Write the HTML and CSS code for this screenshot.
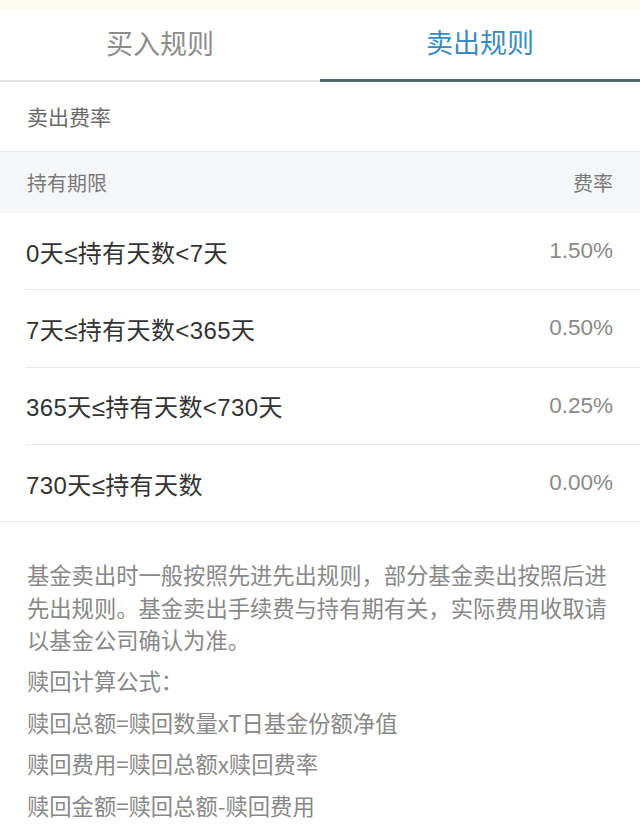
FILE: index.html
```html
<!DOCTYPE html>
<html lang="zh-CN">
<head>
<meta charset="utf-8">
<link rel="stylesheet" href="styles.css">
</head>
<body>
<div class="topbar"></div>
<div class="tabs">
  <div class="tab">买入规则</div>
  <div class="tab active">卖出规则</div>
</div>
<div class="section-title">卖出费率</div>
<div class="thead">
  <span>持有期限</span>
  <span>费率</span>
</div>
<div class="rows">
  <div class="row"><span class="term">0天≤持有天数&lt;7天</span><span class="rate">1.50%</span></div>
  <div class="row"><span class="term">7天≤持有天数&lt;365天</span><span class="rate">0.50%</span></div>
  <div class="row"><span class="term">365天≤持有天数&lt;730天</span><span class="rate">0.25%</span></div>
  <div class="row last"><span class="term">730天≤持有天数</span><span class="rate">0.00%</span></div>
</div>
<div class="notes">
  <p class="para">基金卖出时一般按照先进先出规则，部分基金卖出按照后进先出规则。基金卖出手续费与持有期有关，实际费用收取请以基金公司确认为准。</p>
  <p class="line">赎回计算公式：</p>
  <p class="line">赎回总额=赎回数量xT日基金份额净值</p>
  <p class="line">赎回费用=赎回总额x赎回费率</p>
  <p class="line">赎回金额=赎回总额-赎回费用</p>
</div>
</body>
</html>
```
FILE: styles.css
```css
* { box-sizing: border-box; }
body {
  margin: 0;
  background: #fff;
  font-family: "Noto Sans CJK SC", "Noto Sans", sans-serif;
  width: 640px;
}
.topbar {
  height: 10px;
  background: #fbfaf1;
}
.tabs {
  display: flex;
  height: 72px;
}
.tab {
  flex: 1;
  display: flex;
  align-items: center;
  justify-content: center;
  font-size: 27px;
  color: #8c8c8c;
  border-bottom: 2px solid #e2e2e2;
  padding-bottom: 6px;
}
.tab.active {
  color: #3a8cc0;
  border-bottom: 3px solid #4f6a6e;
}
.section-title {
  height: 70px;
  display: flex;
  align-items: center;
  padding: 0 27px 2px;
  font-size: 21px;
  color: #6a6a6a;
  border-bottom: 1px solid #e6e6e6;
}
.thead {
  height: 61px;
  display: flex;
  align-items: center;
  justify-content: space-between;
  padding: 0 27px;
  background: #f5f6f8;
  font-size: 20px;
  color: #7a7a7a;
}
.rows {
  padding-left: 26px;
}
.row {
  height: 77.3px;
  display: flex;
  align-items: center;
  justify-content: space-between;
  padding-right: 27px;
  border-bottom: 1.5px solid #e8e8e8;
}
.row.last {
  margin-left: -26px;
  padding-left: 26px;
}
.term {
  font-family: "Liberation Sans", "Noto Sans CJK SC", sans-serif;
  font-size: 24px;
  letter-spacing: 0.4px;
  color: #333;
}
.rate {
  font-family: "Liberation Sans", "Noto Sans CJK SC", sans-serif;
  font-size: 22.5px;
  color: #8a8a8a;
}
.notes {
  padding: 36px 20px 0 27px;
  color: #888;
  font-size: 22.3px;
}
.para {
  margin: 0;
  line-height: 32.5px;
}
.line {
  margin: 8.5px 0 0;
  line-height: 33px;
  white-space: nowrap;
}
```
